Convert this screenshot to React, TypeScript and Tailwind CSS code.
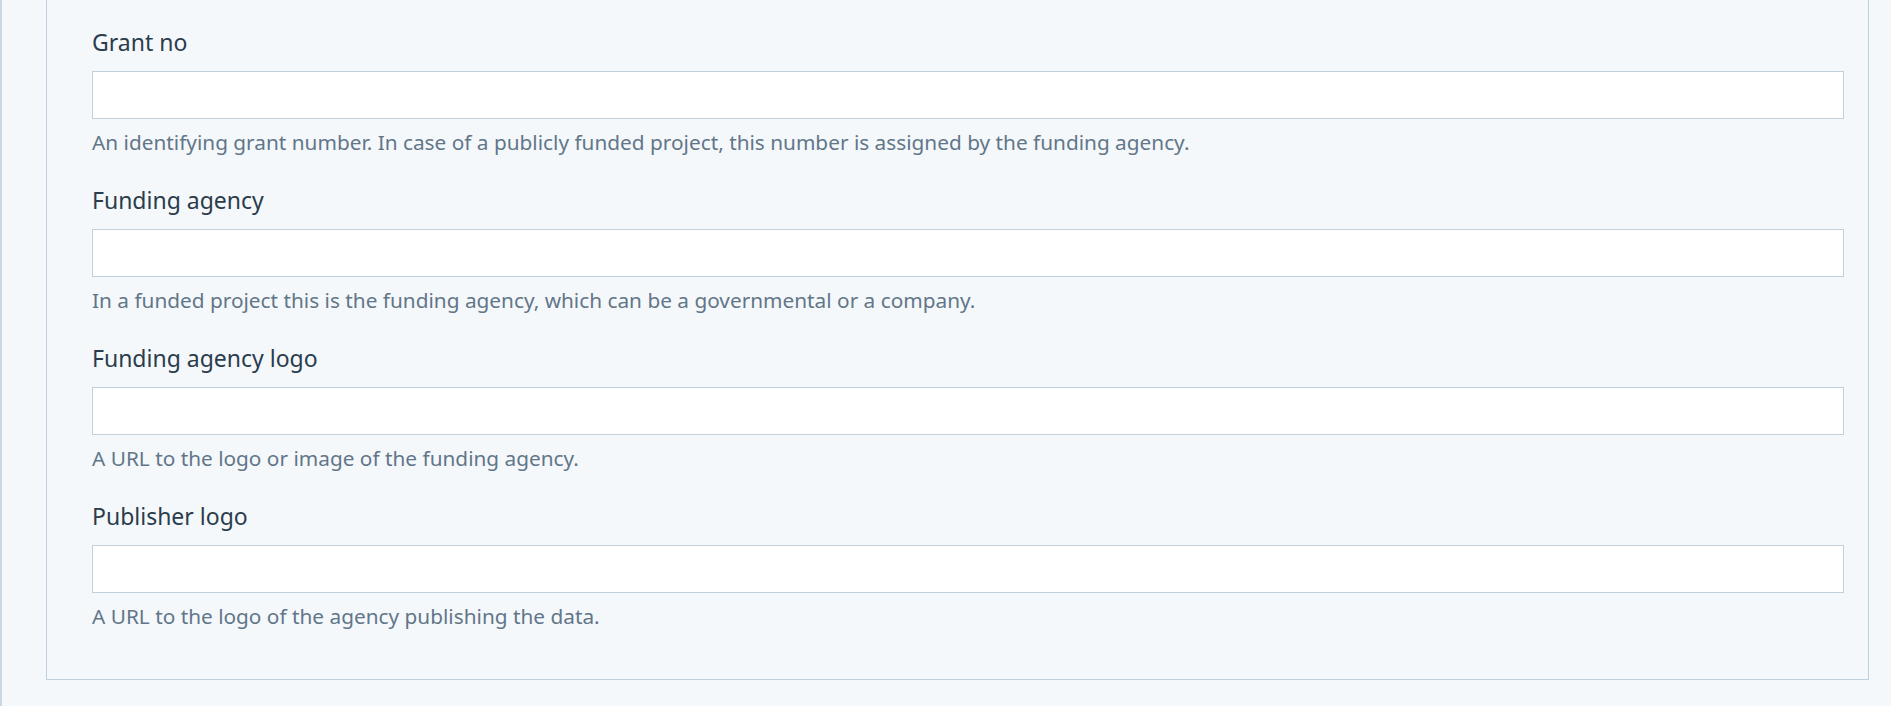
const fields = [
  {
    label: "Grant no",
    help: "An identifying grant number. In case of a publicly funded project, this number is assigned by the funding agency.",
  },
  {
    label: "Funding agency",
    help: "In a funded project this is the funding agency, which can be a governmental or a company.",
  },
  {
    label: "Funding agency logo",
    help: "A URL to the logo or image of the funding agency.",
  },
  {
    label: "Publisher logo",
    help: "A URL to the logo of the agency publishing the data.",
  },
];

export default function App() {
  return (
    <div className="min-h-[706px] border-l-2 border-[#c9d8e3] bg-[#f4f8fb] pl-[44px] pr-[22px] font-['Noto_Sans',sans-serif]">
      <div className="border-x border-b border-[#c0d1dd] pl-[45px] pr-[24px] pt-[26px] pb-[48px]">
        {fields.map((field, i) => (
          <div key={field.label} className={i > 0 ? "mt-[27px]" : ""}>
            <label className="block pt-px text-[23px] leading-[30px] text-[#2b3c4c]">{field.label}</label>
            <input
              type="text"
              className="mt-[14px] block h-[48px] w-full border border-[#c0d1dd] bg-white px-3 outline-none"
            />
            <p className="mt-[8px] text-[20.8px] leading-[30px] text-[#627688]">{field.help}</p>
          </div>
        ))}
      </div>
    </div>
  );
}
